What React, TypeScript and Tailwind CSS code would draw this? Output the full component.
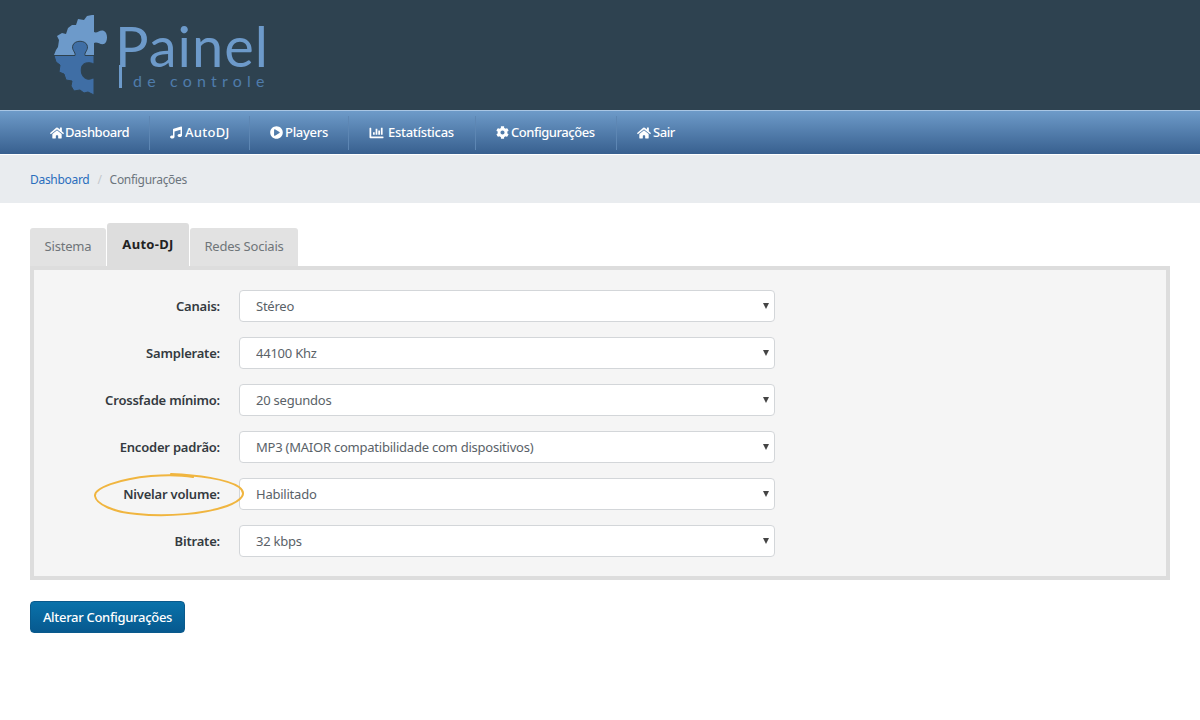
import React from 'react';
import { FaHome, FaMusic, FaPlayCircle, FaChartBar, FaCog } from 'react-icons/fa';

const navItems = [
  { label: 'Dashboard', width: 'w-[120px]', gap: 'gap-[1px]', track: 'tracking-[-0.45px]', icon: <FaHome className="w-[14px] h-[14px]" /> },
  { label: 'AutoDJ', width: 'w-[100px]', gap: 'gap-[3px]', track: 'tracking-[0.3px]', icon: <FaMusic className="w-[12px] h-[13px]" /> },
  { label: 'Players', width: 'w-[99px]', gap: 'gap-[2px]', track: 'tracking-[-0.3px]', icon: <FaPlayCircle className="w-[13px] h-[13px]" /> },
  { label: 'Estatísticas', width: 'w-[127px]', gap: 'gap-[4px]', track: 'tracking-[-0.3px]', icon: <FaChartBar className="w-[15px] h-[14px]" /> },
  { label: 'Configurações', width: 'w-[141px]', gap: 'gap-[2px]', track: 'tracking-[-0.45px]', icon: <FaCog className="w-[13px] h-[13px]" /> },
  { label: 'Sair', width: 'w-[90px]', gap: 'gap-[2px]', track: 'tracking-[-0.45px]', icon: <FaHome className="w-[14px] h-[14px]" /> },
];

const fields = [
  { label: 'Canais:', value: 'Stéreo' },
  { label: 'Samplerate:', value: '44100 Khz' },
  { label: 'Crossfade mínimo:', value: '20 segundos' },
  { label: 'Encoder padrão:', value: 'MP3 (MAIOR compatibilidade com dispositivos)' },
  { label: 'Nivelar volume:', value: 'Habilitado', marked: true },
  { label: 'Bitrate:', value: '32 kbps' },
];

const Puzzle = () => (
  <svg width="70" height="95" viewBox="45 5 70 95" className="shrink-0">
    <path
      fill="#6d9aca"
      d="M92 15 L94 15 L94 32 C97 34 100 29 104 31 C108 33 108 42 104 44 C100 45 97 41 94 43 L94 55 L54 55 L56 50 L58 47 L59 40 L57 36 L62 33 L66 34 L68 28 L72 25 L76 25 L78 19 L84 20 L87 16 Z"
    />
    <path
      fill="#3f6ea5"
      stroke="#2e4250"
      strokeWidth="1"
      d="M54 55.5 L75 55.5 C76 52 71 50 73 45 C75 40 85 40 87 45 C89 50 84 52 85 55.5 L94 55.5 L94 64 C90 62 84 62 82 66 C80 71 82 78 87 79 C90 80 92 78 94 78 L94 95 L88 92 L84 93 L80 90 L74 91 L71 86 L72 81 L66 80 L64 74 L59 72 L60 65 L56 62 Z"
    />
  </svg>
);

const Logo = () => (
  <div className="flex items-start pl-[45px] pt-[5px]">
    <Puzzle />
    <div className="relative ml-[3px] w-[160px] h-[95px] font-['Lato',sans-serif] text-[#6d9aca]">
      <span className="absolute left-[-3px] top-[19px] text-[56px] leading-[44px] font-normal tracking-[1px]">Painel</span>
      <span className="absolute left-[1px] top-[60px] w-[3px] h-[23px] bg-[#6d9aca]" />
      <span className="absolute left-[15px] top-[66px] text-[16px] leading-[20px] tracking-[5.2px] text-[#4f7cab]">de controle</span>
    </div>
  </div>
);

export default function App() {
  return (
    <div className="min-h-[720px] bg-white font-['Noto_Sans',sans-serif] text-[13px] text-[#495057]">
      <header className="h-[110px] bg-[#2e4250] overflow-hidden">
        <Logo />
      </header>

      <nav className="h-[44px] flex items-center pl-[30px] border-t border-[#a9c6e4] bg-gradient-to-b from-[#6e9bc9] to-[#38608f]">
        {navItems.map((item, i) => (
          <a
            key={item.label}
            className={`h-[34px] pl-5 flex items-center text-[13px] font-medium text-white ${item.width} ${item.gap} ${item.track} ${i < navItems.length - 1 ? 'border-r border-[#5d86b3]' : ''}`}
          >
            {item.icon}
            <span>{item.label}</span>
          </a>
        ))}
      </nav>

      <div className="h-[48px] mt-[1px] pt-[2px] px-[30px] flex items-center gap-2 bg-[#e9ecef] text-[12px] tracking-[-0.3px]">
        <a className="text-[#2a6ebd]">Dashboard</a>
        <span className="text-[#c4c8cc]">/</span>
        <span className="text-[#6c757d]">Configurações</span>
      </div>

      <main className="px-[30px] pt-[20px]">
        <div className="flex items-end gap-[1px] h-[43px]">
          <div className="w-[76px] h-[38px] flex items-center justify-center rounded-t-[3px] bg-[#e2e2e2] text-[#6f7579] tracking-[-0.2px]">Sistema</div>
          <div className="w-[82px] h-[43px] flex items-center justify-center rounded-t-[3px] bg-[#dddddd] font-bold text-[#222] tracking-[0.3px]">Auto-DJ</div>
          <div className="w-[108px] h-[38px] flex items-center justify-center rounded-t-[3px] bg-[#e2e2e2] text-[#6f7579] tracking-[-0.2px]">Redes Sociais</div>
        </div>

        <div className="border-4 border-[#dddddd] bg-[#f5f5f5] pt-[20px] pb-[19px] flex flex-col gap-[15px]">
          {fields.map((f) => (
            <div key={f.label} className="relative flex items-center h-[32px]">
              <label className="w-[186px] pt-[2px] text-right font-semibold text-[#343a40] tracking-[-0.2px]">{f.label}</label>
              <div className="relative ml-[19px] w-[536px]">
                <select
                  defaultValue={f.value}
                  className="w-full h-[32px] pl-[16px] pt-[2px] appearance-none bg-white border border-[#d3d6d9] rounded-[4px] text-[13px] tracking-[-0.23px] text-[#5a6268]"
                >
                  <option>{f.value}</option>
                </select>
                <span className="absolute right-[6px] top-[13px] w-0 h-0 border-x-[3px] border-x-transparent border-t-[6px] border-t-[#444]" />
              </div>
              {f.marked && (
                <svg width="154" height="46" viewBox="0 0 154 46" fill="none" className="absolute left-[59px] top-[-6px] pointer-events-none">
                  <path
                    d="M78 2 C104 3 134 7 146 15 C154 21 150 28 134 34 C112 42 74 45 44 42 C20 40 3 32 2 24 C1 16 26 7 58 4 C72 3 88 3 100 5"
                    stroke="#f0b53f"
                    strokeWidth="2"
                    strokeLinecap="round"
                  />
                </svg>
              )}
            </div>
          ))}
        </div>

        <button className="mt-[21px] pt-[2px] w-[155px] h-[32px] rounded-[4px] border border-[#0a5a8c] bg-gradient-to-b from-[#0a72aa] to-[#07598f] text-[13px] tracking-[-0.3px] font-medium text-white">
          Alterar Configurações
        </button>
      </main>
    </div>
  );
}
